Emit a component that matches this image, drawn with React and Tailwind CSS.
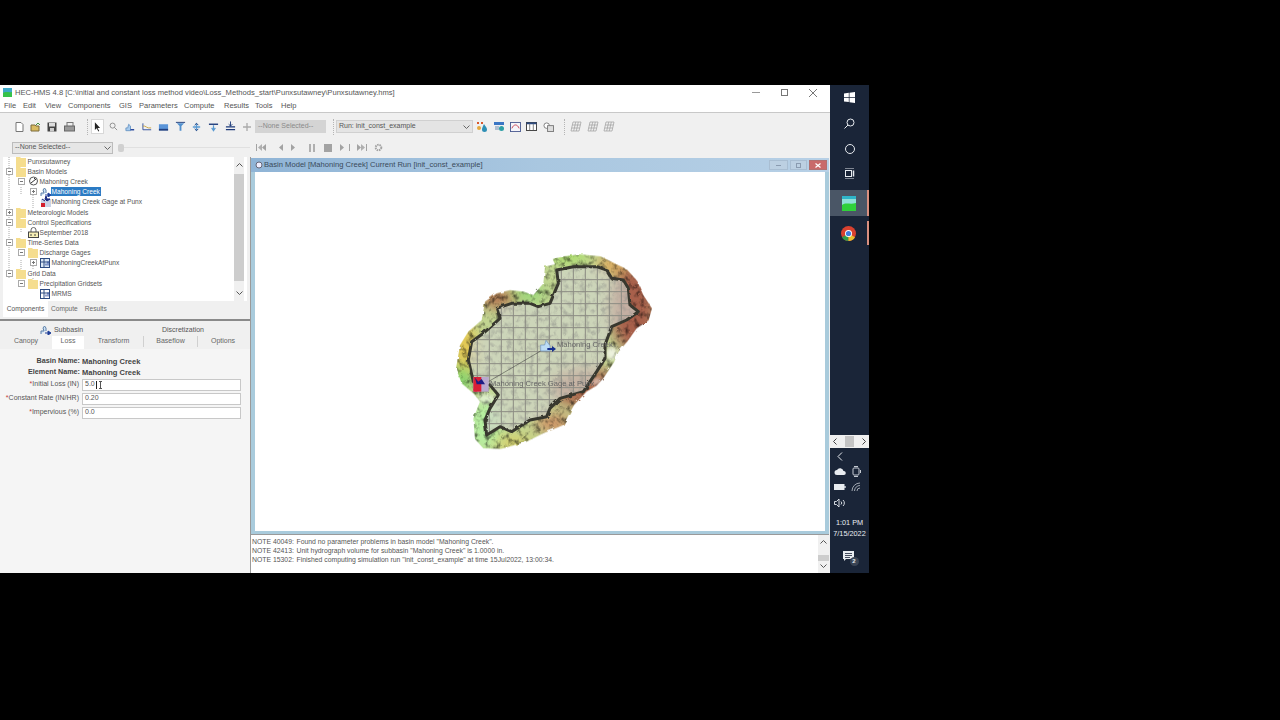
import React from 'react';

const OUTER = '345,58 338,42 372,34 420,28 482,34 530,58 560,72 592,108 610,150 636,190 626,226 590,250 562,290 536,320 522,352 490,400 470,422 440,440 402,480 370,540 310,565 260,590 182,612 130,610 105,582 100,520 120,470 100,445 65,415 48,370 60,300 85,260 125,225 135,170 170,145 210,135 250,140 280,150 310,115 315,65';
const BASIN = '350,75 400,65 470,65 500,75 515,100 550,105 565,130 570,180 595,200 560,225 515,245 495,300 495,340 470,380 430,440 360,460 330,490 320,515 270,525 215,560 180,545 140,570 135,525 150,490 175,450 150,420 100,410 85,345 95,290 130,265 180,220 170,190 215,175 270,175 295,185 330,175 355,115';

const Folder = () => (
  <svg width="10" height="11" viewBox="0 0 10 11" className="shrink-0">
    <path d="M0 1h4l1 1h5v9H0z" fill="#f5dd8e" />
  </svg>
);

const Expander = ({ plus }) => (
  <svg width="7" height="7" viewBox="0 0 7 7" className="shrink-0">
    <rect x=".5" y=".5" width="6" height="6" fill="#fff" stroke="#aaa" />
    <path d={plus ? 'M2 3.500h3M3.500 2v3' : 'M2 3.500h3'} stroke="#777" />
  </svg>
);

const BasinIcon = () => (
  <svg width="11" height="10" viewBox="0 0 11 10" className="shrink-0">
    <circle cx="5.500" cy="5" r="4" fill="#fff" stroke="#555" />
    <path d="M3 7l5-4M6 2l2 2" stroke="#333" />
  </svg>
);

const SubbasinIcon = () => (
  <svg width="12" height="10" viewBox="0 0 12 10" className="shrink-0">
    <path d="M1 9V6h3l-1-3 1.500-2L6 3v3" fill="#cfe3f5" stroke="#5c7fa8" />
    <path d="M5 8h5M8 6l3 2-3 2z" stroke="#1f3f99" fill="#1f3f99" />
  </svg>
);

const GageIcon = () => (
  <svg width="12" height="11" viewBox="0 0 12 11" className="shrink-0">
    <rect x="1" y="3" width="10" height="8" fill="#c9d3e6" />
    <rect x="1" y="7" width="4" height="4" fill="#d3202e" />
    <path d="M6 0l1 3h3L7 5 5 3zM2 3l3 2" stroke="#1a2a80" fill="#1a2a80" />
  </svg>
);

const ClockIcon = () => (
  <svg width="11" height="11" viewBox="0 0 11 11" className="shrink-0">
    <path d="M3 5V3a2.500 2.500 0 0 1 5 0v2" fill="none" stroke="#666" />
    <rect x=".5" y="5" width="10" height="5.500" fill="#f7efb5" stroke="#444" />
    <path d="M3 7v2M7 7v2" stroke="#444" />
  </svg>
);

const TableIcon = ({ blue }) => (
  <svg width="11" height="11" viewBox="0 0 11 11" className="shrink-0">
    <rect x=".5" y="1.500" width="9" height="9" fill={blue ? '#dce8f5' : '#fff'} stroke="#2c4a80" />
    <path d="M.5 5h9M4 1.500v9" stroke="#2c4a80" />
    <path d="M6 8.500V6.500M8 8.500V4.500" stroke="#1f3f99" />
  </svg>
);

function TreeRow({ level, label, icon, plus, selected, noExpander }) {
  const pads = ['pl-[3px]', 'pl-[15px]', 'pl-[27px]'];
  return (
    <div className={`relative flex h-[10.2px] items-center ${pads[level]}`}>
      <div className="flex w-[7px] shrink-0 justify-center">{!noExpander && <Expander plus={plus} />}</div>
      <div className="ml-[3px] flex w-[10px] shrink-0 justify-start">{icon}</div>
      <span className={`ml-[0.5px] whitespace-nowrap px-[1px] text-[6.6px] leading-[9px] ${selected ? 'bg-[#2b7bc4] text-white' : 'bg-white'}`}>
        {label}
      </span>
    </div>
  );
}

function Tool({ children, className = '' }) {
  return <div className={`flex h-[12px] w-[16.6px] shrink-0 items-center justify-center ${className}`}>{children}</div>;
}

const Sep = ({ className }) => <div className={`h-[16px] w-[1px] shrink-0 border-l border-dotted border-[#b5b5b5] ${className}`} />;

const Doc = () => (
  <svg width="9" height="10" viewBox="0 0 9 10"><path d="M1 .5h5l2 2v7H1z" fill="#fff" stroke="#777" /></svg>
);
const Open = () => (
  <svg width="11" height="10" viewBox="0 0 11 10"><path d="M1 9V3h4l1 1h3v5z" fill="#d9bb62" stroke="#7a6a3a" /><path d="M6 3l2-2 2 2" fill="none" stroke="#3f8f3a" /></svg>
);
const Save = () => (
  <svg width="10" height="10" viewBox="0 0 10 10"><rect x=".5" y=".5" width="9" height="9" fill="#444" /><rect x="2" y="1" width="6" height="3.500" fill="#ddd" /><rect x="3" y="6" width="4" height="3.500" fill="#ccc" /></svg>
);
const Print = () => (
  <svg width="11" height="10" viewBox="0 0 11 10"><rect x="3" y=".5" width="6" height="4" fill="#eee" stroke="#777" /><rect x=".5" y="4" width="10" height="5" fill="#999" stroke="#666" /></svg>
);
const Arrow = () => (
  <svg width="7" height="10" viewBox="0 0 8 11"><path d="M1 0v9l2-2 2 3.500 1-.5-2-3.500h3z" fill="#222" /></svg>
);
const Zoom = () => (
  <svg width="9" height="9" viewBox="0 0 10 10"><circle cx="4" cy="4" r="2.800" fill="none" stroke="#888" /><path d="M6 6l3 3" stroke="#888" /></svg>
);
const ElemA = () => (
  <svg width="11" height="10" viewBox="0 0 12 10"><path d="M1 9V6h2l1-4 2 2v5z" fill="#a6cbee" stroke="#6b97c5" /><path d="M6 8h4" stroke="#1f3f99" strokeWidth="1.500" /></svg>
);
const ElemB = () => (
  <svg width="11" height="10" viewBox="0 0 12 10"><path d="M1 1v7h9" fill="none" stroke="#2c4a9a" /><path d="M1 4c3-1 4 3 9 2" fill="none" stroke="#c9a33c" /></svg>
);
const ElemC = () => (
  <svg width="11" height="10" viewBox="0 0 12 10"><rect x="1" y="2" width="10" height="6" fill="#5a94d8" /><rect x="1" y="7" width="10" height="2" fill="#1f3f80" /></svg>
);
const ElemD = () => (
  <svg width="11" height="11" viewBox="0 0 12 11"><path d="M2 2h8l-3 3v5H5V5z" fill="#4f8fce" /><path d="M1 1h10" stroke="#1d3a7a" /></svg>
);
const ElemE = () => (
  <svg width="11" height="10" viewBox="0 0 12 10"><path d="M6 1v8M2 5h8" stroke="#5a9ad2" strokeWidth="1.500" /><path d="M4 3l2-2 2 2M4 7l2 2 2-2" fill="none" stroke="#1d3a7a" /></svg>
);
const ElemF = () => (
  <svg width="11" height="10" viewBox="0 0 12 10"><path d="M1 2h10" stroke="#1d3a7a" strokeWidth="1.500" /><path d="M6 3v5M4 6l2 3 2-3" fill="none" stroke="#5a9ad2" strokeWidth="1.300" /></svg>
);
const ElemG = () => (
  <svg width="11" height="11" viewBox="0 0 12 11"><path d="M6 0v5M4 3l2 2 2-2" fill="none" stroke="#1d3a7a" /><path d="M1 6h10M1 9h10" stroke="#1d3a7a" strokeWidth="1.300" /></svg>
);
const Plus = () => (
  <svg width="10" height="10" viewBox="0 0 10 10"><path d="M5 1v8M1 5h8" stroke="#aaa" strokeWidth="1.300" /></svg>
);
const RunA = () => (
  <svg width="12" height="11" viewBox="0 0 12 11"><path d="M1 1l2 2M3 1L1 3M5 1l2 2M7 1L5 3" stroke="#d9572b" /><path d="M8 3c2 3 3 4 3 5.500a2.500 2.500 0 0 1-5 0C6 7 7 5 8 3z" fill="#2e8fb5" /><circle cx="3" cy="7" r="2" fill="#e6a83c" /></svg>
);
const RunB = () => (
  <svg width="12" height="11" viewBox="0 0 12 11"><rect x="1" y="1" width="10" height="3" fill="#3b76c4" /><path d="M2 6h4M2 8h4" stroke="#6e8fb5" /><circle cx="8.500" cy="7.500" r="2.500" fill="#2e9fa5" /></svg>
);
const RunC = () => (
  <svg width="11" height="10" viewBox="0 0 12 11"><rect x=".5" y=".5" width="11" height="10" fill="#f5f5fa" stroke="#4a5a90" /><path d="M2 7c2-5 6-5 8 0" fill="none" stroke="#c43a4a" /></svg>
);
const RunD = () => (
  <svg width="11" height="9" viewBox="0 0 12 10"><rect x=".5" y=".5" width="11" height="9" fill="#fff" stroke="#333" /><rect x=".5" y=".5" width="11" height="2" fill="#2c4a80" /><path d="M4 2v7M8 2v7" stroke="#777" /></svg>
);
const RunE = () => (
  <svg width="11" height="10" viewBox="0 0 12 11"><circle cx="4" cy="4" r="3" fill="#fff" stroke="#777" /><rect x="5" y="4" width="6.500" height="6.500" fill="#ddd" stroke="#777" /></svg>
);
const Grid3 = () => (
  <svg width="12" height="11" viewBox="0 0 12 11"><path d="M3 1h8L9 10H1zM5.700 1L3.700 10M8.300 1L6.300 10M2.300 4h8M1.700 7h8" fill="none" stroke="#a5a5a5" strokeWidth=".8" /></svg>
);

const Rew = ({ flip, double, bar }) => (
  <svg width="11" height="9" viewBox="0 0 11 9" className={flip ? '-scale-x-100' : ''}>
    {bar && <rect x="0" y="1" width="1" height="7" fill="#a3a3a3" />}
    {double && <path d="M6 1v7L2 4.500z" fill="#b0b0b0" />}
    <path d="M10 1v7L6 4.500z" fill="#a3a3a3" />
  </svg>
);

export default function App() {
  return (
    <div className="h-[720px] w-[1280px] overflow-hidden bg-black pt-[85px] font-['Liberation_Sans',sans-serif] text-[7.5px] text-[#555]">
      <div className="flex h-[488px] w-[869px] blur-[0.45px]">
        <div className="flex w-[830px] shrink-0 flex-col bg-white">
          {/* title */}
          <div className="flex h-[15px] items-center pl-[3px]">
            <svg width="9" height="9" viewBox="0 0 9 9" className="shrink-0">
              <rect width="9" height="9" fill="#3fa9c9" />
              <path d="M0 5c3-2 5 0 9-1v5H0z" fill="#36c24a" />
            </svg>
            <span className="ml-[3px] whitespace-nowrap text-[7.6px]">HEC-HMS 4.8 [C:\initial and constant loss method video\Loss_Methods_start\Punxsutawney\Punxsutawney.hms]</span>
            <div className="ml-auto flex items-center">
              <div className="h-px w-[8px] bg-[#999]" />
              <div className="ml-[21px] h-[7px] w-[7px] border border-[#777]" />
              <svg width="8" height="8" viewBox="0 0 8 8" className="ml-[21px] mr-[13px]"><path d="M0 0l8 8M8 0L0 8" stroke="#777" /></svg>
            </div>
          </div>
          {/* menu */}
          <div className="flex h-[13px] items-center border-b border-[#c8c8c8] pl-[4px]">
            <span className="w-[19px]">File</span>
            <span className="w-[22px]">Edit</span>
            <span className="w-[23px]">View</span>
            <span className="w-[51px]">Components</span>
            <span className="w-[20px]">GIS</span>
            <span className="w-[45px]">Parameters</span>
            <span className="w-[40px]">Compute</span>
            <span className="w-[31px]">Results</span>
            <span className="w-[26px]">Tools</span>
            <span>Help</span>
          </div>
          {/* toolbars */}
          <div className="flex h-[44px] flex-col bg-[#f0f0f0]">
            <div className="flex h-[27px] items-center pl-[11px]">
              <Tool><Doc /></Tool>
              <Tool><Open /></Tool>
              <Tool><Save /></Tool>
              <Tool><Print /></Tool>
              <Sep className="ml-[9.6px] mr-[3px]" />
              <div className="flex h-[15px] w-[13px] shrink-0 items-center justify-center border border-[#d8d8d8] bg-white"><Arrow /></div>
              <Tool className="ml-[1.7px]"><Zoom /></Tool>
              <Tool><ElemA /></Tool>
              <Tool><ElemB /></Tool>
              <Tool><ElemC /></Tool>
              <Tool><ElemD /></Tool>
              <Tool><ElemE /></Tool>
              <Tool><ElemF /></Tool>
              <Tool><ElemG /></Tool>
              <Tool><Plus /></Tool>
              <div className="flex h-[13px] w-[71px] shrink-0 items-center bg-[#d4d4d4] pl-[3px] text-[7px] text-[#8a8a8a]">--None Selected--</div>
              <Sep className="ml-[7px] mr-[2px]" />
              <div className="flex h-[13px] w-[137px] shrink-0 items-center border border-[#d0d0d0] bg-[#e4e4e4] pl-[2px] text-[7px]">
                Run: init_const_example
                <svg width="7" height="4" viewBox="0 0 7 4" className="ml-auto mr-[2px]"><path d="M.5.500l3 3 3-3" fill="none" stroke="#666" /></svg>
              </div>
              <div className="ml-[0.7px] flex">
                <Tool><RunA /></Tool>
                <Tool><RunB /></Tool>
                <Tool><RunC /></Tool>
                <Tool><RunD /></Tool>
                <Tool><RunE /></Tool>
              </div>
              <Sep className="ml-[7.3px] mr-[2.7px]" />
              <Tool><Grid3 /></Tool>
              <Tool><Grid3 /></Tool>
              <Tool><Grid3 /></Tool>
            </div>
            <div className="mt-[1px] flex h-[13px] items-center pl-[12px]">
              <div className="flex h-[12px] w-[101px] shrink-0 items-center border border-[#bcbcbc] bg-[#e6e6e6] pl-[2px] text-[7px]">
                --None Selected--
                <svg width="7" height="4" viewBox="0 0 7 4" className="ml-auto mr-[1px]"><path d="M.5.500l3 3 3-3" fill="none" stroke="#666" /></svg>
              </div>
              <div className="ml-[5px] h-[8px] w-[6px] shrink-0 rounded-[2px] bg-[#d0d0d0]" />
              <div className="h-px w-[126px] shrink-0 bg-[#e0e0e0]" />
              <div className="ml-[3.7px] flex">
                <Tool><Rew double bar /></Tool>
                <Tool><Rew /></Tool>
                <Tool><Rew flip /></Tool>
                <Tool><div className="flex gap-[2px]"><div className="h-[8px] w-[2px] bg-[#b0b0b0]" /><div className="h-[8px] w-[2px] bg-[#b0b0b0]" /></div></Tool>
                <Tool><div className="h-[8px] w-[8px] bg-[#a3a3a3]" /></Tool>
                <Tool><Rew flip bar /></Tool>
                <Tool><Rew flip double bar /></Tool>
                <Tool><svg width="9" height="9" viewBox="0 0 9 9"><circle cx="4.500" cy="4.500" r="2.800" fill="none" stroke="#a3a3a3" strokeWidth="2" strokeDasharray="1.500 .8" /></svg></Tool>
              </div>
            </div>
          </div>
          {/* body */}
          <div className="flex min-h-0 flex-1">
            {/* left pane */}
            <div className="flex w-[251px] shrink-0 flex-col border-r border-[#9a9a9a] bg-[#f0f0f0]">
              <div className="relative ml-[3px] mr-[3px] flex h-[144px] shrink-0 overflow-hidden bg-white">
                <svg width="40" height="144" viewBox="0 0 40 144" className="absolute left-0 top-0">
                  <path d="M6 0v122M18 30v8M18 72v4M18 103v16M30 36v16M30 103v30" stroke="#aaa" strokeDasharray="1 1" fill="none" />
                </svg>
                <div className="relative mt-[-1px] flex-1">
                  <TreeRow level={0} noExpander label="Punxsutawney" icon={<Folder />} />
                  <TreeRow level={0} label="Basin Models" icon={<Folder />} />
                  <TreeRow level={1} label="Mahoning Creek" icon={<BasinIcon />} />
                  <TreeRow level={2} plus selected label="Mahoning Creek" icon={<SubbasinIcon />} />
                  <TreeRow level={2} noExpander label="Mahoning Creek Gage at Punx" icon={<GageIcon />} />
                  <TreeRow level={0} plus label="Meteorologic Models" icon={<Folder />} />
                  <TreeRow level={0} label="Control Specifications" icon={<Folder />} />
                  <TreeRow level={1} noExpander label="September 2018" icon={<ClockIcon />} />
                  <TreeRow level={0} label="Time-Series Data" icon={<Folder />} />
                  <TreeRow level={1} label="Discharge Gages" icon={<Folder />} />
                  <TreeRow level={2} plus label="MahoningCreekAtPunx" icon={<TableIcon blue />} />
                  <TreeRow level={0} label="Grid Data" icon={<Folder />} />
                  <TreeRow level={1} label="Precipitation Gridsets" icon={<Folder />} />
                  <TreeRow level={2} noExpander label="MRMS" icon={<TableIcon />} />
                </div>
                <div className="mr-[3px] flex w-[10px] shrink-0 flex-col items-center justify-between bg-[#f0f0f0] py-[6px]">
                  <svg width="7" height="4" viewBox="0 0 7 4"><path d="M.5 3.500l3-3 3 3" fill="none" stroke="#555" /></svg>
                  <div className="mb-[10px] mt-[7px] w-full flex-1 bg-[#cdcdcd]" />
                  <svg width="7" height="4" viewBox="0 0 7 4"><path d="M.5.500l3 3 3-3" fill="none" stroke="#555" /></svg>
                </div>
              </div>
              <div className="flex h-[17px] shrink-0 items-start pl-[3px] text-[6.6px]">
                <div className="flex h-[16px] w-[45px] items-center justify-center bg-white">Components</div>
                <div className="ml-[3px] flex h-[15px] items-center text-[#6a6a6a]">Compute</div>
                <div className="ml-[7px] flex h-[15px] items-center text-[#6a6a6a]">Results</div>
              </div>
              <div className="mt-[1px] h-[2px] shrink-0 bg-[#8a8a8a]" />
              <div className="mt-[3px] flex h-[12px] shrink-0 items-center text-[7px]">
                <div className="flex w-[123px] items-center justify-center gap-[2px]"><SubbasinIcon />Subbasin</div>
                <div className="w-[120px] text-center">Discretization</div>
              </div>
              <div className="flex h-[13px] shrink-0 items-start text-[7px] text-[#666]">
                <div className="w-[52px] text-center">Canopy</div>
                <div className="flex h-full w-[32px] items-start justify-center bg-white">Loss</div>
                <div className="w-[60px] border-r border-[#d0d0d0] text-center">Transform</div>
                <div className="w-[54px] border-r border-[#d0d0d0] text-center">Baseflow</div>
                <div className="w-[50px] text-center">Options</div>
              </div>
              <div className="flex flex-1 flex-col bg-[#f5f5f5] pl-[3px] pt-[7.5px]">
                <div className="flex h-[10.5px] items-center font-bold text-[#444]">
                  <span className="w-[77px] whitespace-nowrap text-right text-[7.2px]">Basin Name:</span>
                  <span className="ml-[2px]">Mahoning Creek</span>
                </div>
                <div className="flex h-[10.5px] items-center font-bold text-[#444]">
                  <span className="w-[77px] whitespace-nowrap text-right text-[7.2px]">Element Name:</span>
                  <span className="ml-[2px]">Mahoning Creek</span>
                </div>
                {[
                  ['Initial Loss (IN)', '5.0'],
                  ['Constant Rate (IN/HR)', '0.20'],
                  ['Impervious (%)', '0.0'],
                ].map(([name, value], i) => (
                  <div key={name} className={`flex h-[13px] items-center ${i ? 'mt-[1px]' : 'mt-[0.5px]'}`}>
                    <span className="w-[76px] whitespace-nowrap text-right text-[7px]"><span className="text-[#c43a3a]">*</span>{name}</span>
                    <div className="relative ml-[3px] flex h-[12px] w-[159px] items-center border border-[#c8c8c8] bg-white pl-[2px] text-[7px]">
                      {value}
                      {i === 0 && <span className="ml-[1px] h-[8px] w-px bg-[#222]" />}
                      {i === 0 && <span className="absolute left-[16px] top-[1px] h-[8px] w-[3px] border-x-0 border-y border-[#555] after:absolute after:left-[1px] after:top-0 after:h-[7px] after:w-px after:bg-[#555]" />}
                    </div>
                  </div>
                ))}
              </div>
            </div>
            {/* right pane */}
            <div className="flex min-w-0 flex-1 flex-col bg-[#f0f0f0] pr-[1px]">
              <div className="mt-[1px] flex h-[14px] shrink-0 items-center bg-gradient-to-r from-[#8fb4d6] via-[#a9c7e0] to-[#b7d0e6] pl-[4px] text-[#3a4a5a]">
                <svg width="8" height="8" viewBox="0 0 8 8" className="shrink-0"><circle cx="4" cy="4" r="3" fill="#eef" stroke="#667" /></svg>
                <span className="ml-[1px] text-[7.6px]">Basin Model [Mahoning Creek] Current Run [init_const_example]</span>
                <div className="ml-auto mr-[2px] flex h-[10px] items-stretch gap-[2px]">
                  <div className="flex w-[19px] items-center justify-center border border-[#a9bed2] bg-[#bcd0e2]"><div className="h-px w-[5px] bg-[#8a9bb0]" /></div>
                  <div className="flex w-[17px] items-center justify-center border border-[#a9bed2] bg-[#bcd0e2]"><div className="h-[5px] w-[5px] border border-[#8a9bb0]" /></div>
                  <div className="flex w-[18px] items-center justify-center border border-[#b07070] bg-[#c96a6a]">
                    <svg width="6" height="5" viewBox="0 0 6 5"><path d="M.5.500l5 4M5.500.500l-5 4" stroke="#fff" strokeWidth="1.200" /></svg>
                  </div>
                </div>
              </div>
              <div className="relative min-h-0 flex-1 border-x-[4px] border-b-[3px] border-[#a9cbdc] bg-white">
                <div className="absolute left-[185px] top-[73px] h-[215px] w-[225px]">
                  <svg width="225" height="215" viewBox="0 0 675 645" className="absolute left-0 top-0">
                    <defs>
                      <clipPath id="outer"><polygon points={OUTER} /></clipPath>
                      <clipPath id="basin"><polygon points={BASIN} /></clipPath>
                      <filter id="soft"><feGaussianBlur stdDeviation="20" /></filter>
                      <filter id="spot"><feGaussianBlur stdDeviation="6" /></filter>
                      <filter id="tex" x="0" y="0" width="100%" height="100%" colorInterpolationFilters="sRGB">
                        <feTurbulence type="fractalNoise" baseFrequency="0.06" numOctaves="4" seed="11" result="n" />
                        <feColorMatrix in="n" type="matrix" values="1.500 0 0 0 0.2 1.500 0 0 0 0.2 1.500 0 0 0 0.2 0 0 0 0 1" result="g" />
                        <feBlend in="SourceGraphic" in2="g" mode="multiply" />
                      </filter>
                      <filter id="wob" filterUnits="userSpaceOnUse" x="0" y="0" width="675" height="645">
                        <feTurbulence type="fractalNoise" baseFrequency="0.05" numOctaves="2" seed="4" />
                        <feDisplacementMap in="SourceGraphic" scale="9" />
                      </filter>
                    </defs>
                    <g filter="url(#wob)">
                      <g clipPath="url(#outer)">
                        <g filter="url(#tex)">
                          <rect width="675" height="645" fill="#c2d592" />
                          <g filter="url(#soft)">
                            <ellipse cx="580" cy="190" rx="70" ry="130" fill="#a8604c" />
                            <ellipse cx="440" cy="430" rx="110" ry="60" fill="#ad6c50" />
                            <ellipse cx="380" cy="30" rx="70" ry="25" fill="#aae06a" />
                            <ellipse cx="515" cy="60" rx="45" ry="28" fill="#dfa75c" />
                            <ellipse cx="170" cy="160" rx="55" ry="28" fill="#b2704c" />
                            <ellipse cx="270" cy="145" rx="45" ry="22" fill="#8fd870" />
                            <ellipse cx="75" cy="310" rx="34" ry="80" fill="#e6c850" />
                            <ellipse cx="65" cy="400" rx="34" ry="36" fill="#80d468" />
                            <ellipse cx="135" cy="540" rx="50" ry="80" fill="#b6f0a0" />
                            <ellipse cx="220" cy="595" rx="60" ry="24" fill="#d8d068" />
                            <ellipse cx="340" cy="535" rx="55" ry="28" fill="#cf8c60" />
                          </g>
                        </g>
                        <g filter="url(#spot)" fill="#fff">
                          <ellipse cx="515" cy="325" rx="18" ry="20" opacity=".7" />
                          <ellipse cx="470" cy="410" rx="18" ry="10" opacity=".55" />
                          <ellipse cx="140" cy="460" rx="28" ry="14" opacity=".5" />
                        </g>
                      </g>
                      <polygon points={BASIN} fill="#d2d4cc" opacity=".68" />
                    </g>
                    <g clipPath="url(#basin)" stroke="#8b8b83" strokeWidth="3">
                      {[112, 148, 184, 220, 256, 292, 328, 364, 400, 436, 472, 508, 544].map((x) => (
                        <line key={x} x1={x} y1="40" x2={x} y2="600" />
                      ))}
                      {[68, 104, 140, 176, 212, 248, 284, 320, 356, 392, 428, 464, 500, 536].map((y) => (
                        <line key={y} x1="60" y1={y} x2="620" y2={y} />
                      ))}
                    </g>
                    <g filter="url(#wob)">
                      <polygon points={BASIN} fill="none" stroke="#37372f" strokeWidth="9" strokeLinejoin="round" />
                    </g>
                    <line x1="302" y1="318" x2="145" y2="410" stroke="#333" strokeWidth="1.500" />
                    <path d="M302 318v-18h12l4-14 12 16v16z" fill="#bcdcf5" stroke="#6b93bd" strokeWidth="2" />
                    <path d="M322 312h18" stroke="#16308f" strokeWidth="6" />
                    <path d="M336 303l12 9-12 9z" fill="#16308f" />
                    <rect x="100" y="396" width="46" height="44" fill="#b9a9cf" />
                    <rect x="100" y="396" width="24" height="44" fill="#d81f36" />
                    <circle cx="108" cy="433" r="7" fill="#d81f36" />
                    <path d="M105 398l10 12 10-8 10 16h-25z" fill="#1c1c85" />
                  </svg>
                  <span className="absolute left-[117px] top-[94px] whitespace-nowrap text-[7.6px] text-[#666]">Mahoning Creek</span>
                  <span className="absolute left-[50px] top-[133px] whitespace-nowrap text-[7.6px] text-[#666]">Mahoning Creek Gage at Punx</span>
                </div>
              </div>
              <div className="flex h-[39px] shrink-0 border-t border-[#9a9a9a] bg-white">
                <div className="flex-1 pl-[1px] pt-[2.5px] text-[6.85px]">
                  {[
                    ['NOTE 40049:', 'Found no parameter problems in basin model "Mahoning Creek".'],
                    ['NOTE 42413:', 'Unit hydrograph volume for subbasin "Mahoning Creek" is 1.0000 in.'],
                    ['NOTE 15302:', 'Finished computing simulation run "init_const_example" at time 15Jul2022, 13:00:34.'],
                  ].map(([code, msg]) => (
                    <div key={code} className="flex h-[9.2px] items-center whitespace-nowrap">
                      <span className="w-[44.5px] shrink-0">{code}</span>
                      <span>{msg}</span>
                    </div>
                  ))}
                </div>
                <div className="flex w-[11px] shrink-0 flex-col items-center justify-between bg-[#f0f0f0] py-[5px]">
                  <svg width="7" height="4" viewBox="0 0 7 4"><path d="M.5 3.500l3-3 3 3" fill="none" stroke="#555" /></svg>
                  <div className="mb-[3px] mt-auto h-[6px] w-full bg-[#cdcdcd]" />
                  <svg width="7" height="4" viewBox="0 0 7 4"><path d="M.5.500l3 3 3-3" fill="none" stroke="#555" /></svg>
                </div>
              </div>
            </div>
          </div>
        </div>
        {/* taskbar */}
        <div className="flex w-[39px] shrink-0 flex-col items-stretch bg-[#1a2538] text-[#e8ecf0]">
          <div className="flex h-[24px] items-center justify-center">
            <svg width="11" height="11" viewBox="0 0 11 11"><path d="M0 1.500l4.800-.7v4.300H0zM5.500.7L11 0v5.100H5.500zM0 5.800h4.800v4.300L0 9.500zM5.500 5.800H11V11l-5.500-.7z" fill="#fff" /></svg>
          </div>
          <div className="flex h-[28px] items-center justify-center">
            <svg width="11" height="11" viewBox="0 0 11 11"><circle cx="6.500" cy="4.500" r="3.500" fill="none" stroke="#e8ecf0" /><path d="M4 7l-3.500 3.500" stroke="#e8ecf0" /></svg>
          </div>
          <div className="flex h-[24px] items-center justify-center">
            <div className="h-[10px] w-[10px] rounded-full border-[1.5px] border-[#e8ecf0]" />
          </div>
          <div className="flex h-[24px] items-center justify-center">
            <svg width="11" height="11" viewBox="0 0 11 11"><path d="M1 0h9M1 11h9" stroke="#e8ecf0" /><rect x="1.500" y="2.500" width="6" height="6" fill="none" stroke="#e8ecf0" /><path d="M9.500 2.500v6" stroke="#e8ecf0" strokeWidth="1.500" /></svg>
          </div>
          <div className="mt-[5px] flex h-[26px] items-center justify-center border-r-2 border-[#d98f7f] bg-[#4a5666]">
            <svg width="14" height="15" viewBox="0 0 14 15">
              <rect width="14" height="15" fill="#8fe0d8" />
              <rect width="14" height="3" fill="#2fb5c9" />
              <path d="M0 9c4-3 8 0 14-2v8H0z" fill="#2fd13a" />
            </svg>
          </div>
          <div className="mt-[5px] flex h-[24px] items-center justify-center border-r-2 border-[#d98f7f]">
            <svg width="15" height="15" viewBox="0 0 15 15">
              <circle cx="7.500" cy="7.500" r="7.500" fill="#d8412f" />
              <path d="M7.500 7.500L1 11.200A7.500 7.500 0 0 0 7.500 15z" fill="#2f9e4a" />
              <path d="M7.500 7.500L14 11.200A7.500 7.500 0 0 1 7.500 15z" fill="#e8c02e" />
              <circle cx="7.500" cy="7.500" r="3.500" fill="#fff" />
              <circle cx="7.500" cy="7.500" r="2.600" fill="#3f7fe0" />
            </svg>
          </div>
          <div className="mt-[190px] flex h-[13px] items-center justify-between bg-[#f0f0f0] px-[3px] text-[#444]">
            <svg width="4" height="7" viewBox="0 0 4 7"><path d="M3.500.5l-3 3 3 3" fill="none" stroke="#444" /></svg>
            <div className="h-[11px] w-[9px] bg-[#c4c4c4]" />
            <svg width="4" height="7" viewBox="0 0 4 7"><path d="M.5.500l3 3-3 3" fill="none" stroke="#444" /></svg>
          </div>
          <div className="mt-[1px] flex h-[15px] items-center pl-[7px]">
            <svg width="6" height="9" viewBox="0 0 6 9"><path d="M5 .5l-4 4 4 4" fill="none" stroke="#e8ecf0" /></svg>
          </div>
          <div className="grid grid-cols-[16px_16px] gap-y-[4px] pl-[2px] pt-[1px]">
            <div className="flex h-[12px] items-center justify-center">
              <svg width="12" height="7" viewBox="0 0 12 7"><path d="M3 7a2.500 2.500 0 0 1 0-5 3.500 3.500 0 0 1 6.500 1A2 2 0 0 1 10 7z" fill="#e8ecf0" /></svg>
            </div>
            <div className="flex h-[12px] items-center justify-center">
              <svg width="10" height="11" viewBox="0 0 10 11"><rect x="2" y="2" width="6" height="7" rx="1" fill="none" stroke="#c5cbd3" /><path d="M3 .5h4M3 10.500h4M9.500 4v3" stroke="#c5cbd3" /></svg>
            </div>
            <div className="flex h-[12px] items-center justify-center">
              <svg width="12" height="8" viewBox="0 0 12 8"><rect x="0" y="1" width="10.500" height="6" fill="#e8ecf0" /><path d="M11 3v2" stroke="#e8ecf0" strokeWidth="1.300" /></svg>
            </div>
            <div className="flex h-[12px] items-center justify-center">
              <svg width="10" height="10" viewBox="0 0 10 10"><path d="M1 9a8 8 0 0 1 8-8M3.500 9A5.500 5.500 0 0 1 9 3.500M6 9a3 3 0 0 1 3-3" fill="none" stroke="#a0a7b0" /></svg>
            </div>
            <div className="flex h-[12px] items-center justify-center">
              <svg width="12" height="10" viewBox="0 0 12 10"><path d="M.5 3.500h2l2.500-2.500v8L2.500 6.500h-2z" fill="none" stroke="#d5dae0" /><path d="M7 3.500a2 2 0 0 1 0 3M9 2a4 4 0 0 1 0 6" fill="none" stroke="#d5dae0" /></svg>
            </div>
          </div>
          <div className="mt-[7.5px] whitespace-nowrap text-center text-[7.3px] leading-[11px]">
            <div>1:01 PM</div>
            <div>7/15/2022</div>
          </div>
          <div className="mt-[12px] flex justify-center">
            <div className="relative h-[13px] w-[14px]">
              <svg width="11" height="10" viewBox="0 0 11 10" className="absolute left-0 top-0"><path d="M0 0h11v8H3L1 10V8H0z" fill="#e8ecf0" /><path d="M2 2.500h7M2 4.500h7M2 6.500h5" stroke="#1a2538" strokeWidth=".8" /></svg>
              <div className="absolute bottom-[-2px] right-[-2px] flex h-[9px] w-[9px] items-center justify-center rounded-full bg-[#3a4454] text-[6px] font-bold">2</div>
            </div>
          </div>
        </div>
      </div>
    </div>
  );
}
